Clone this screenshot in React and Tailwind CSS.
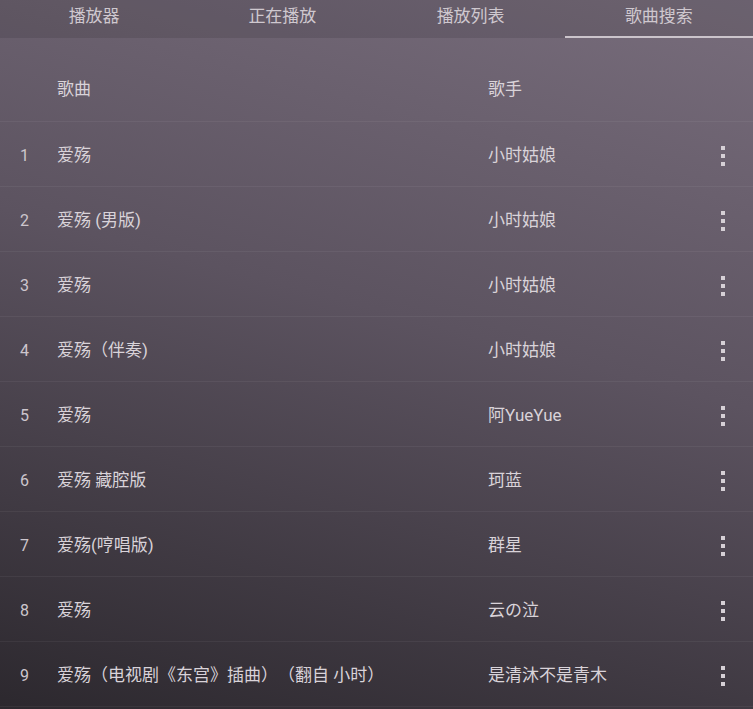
import React from 'react';

const tabs = ['播放器', '正在播放', '播放列表', '歌曲搜索'];

const songs = [
    { title: '爱殇', singer: '小时姑娘' },
    { title: '爱殇 (男版)', singer: '小时姑娘' },
    { title: '爱殇', singer: '小时姑娘' },
    { title: '爱殇（伴奏)', singer: '小时姑娘' },
    { title: '爱殇', singer: '阿YueYue' },
    { title: '爱殇 藏腔版', singer: '珂蓝' },
    { title: '爱殇(哼唱版)', singer: '群星' },
    { title: '爱殇', singer: '云の泣' },
    { title: '爱殇（电视剧《东宫》插曲）（翻自 小时）', singer: '是清沐不是青木' },
];

const MoreIcon = () => (
    <div className="flex flex-col items-center gap-[4px]">
        <span className="block w-[4px] h-[4px] bg-[#d6d0d6]" />
        <span className="block w-[4px] h-[4px] bg-[#d6d0d6]" />
        <span className="block w-[4px] h-[4px] bg-[#d6d0d6]" />
    </div>
);

const App = () => {
    const active = 3;

    return (
        <div
            className="w-[753px] h-[709px] overflow-hidden text-[#d9d3d9] [text-spacing-trim:space-all] bg-[linear-gradient(195deg,#786d7c_0%,#5c5360_45%,#2c282e_100%)]"
            style={{ fontFamily: 'Roboto, "Noto Sans CJK SC", sans-serif' }}
        >
            {/* tabs */}
            <div className="flex h-[38px] bg-black/10">
                {tabs.map((t, i) => (
                    <div
                        key={t}
                        className={
                            'flex-1 flex items-center justify-center text-[17px] text-[#cfc8cf] ' +
                            (i === active ? 'border-b-2 border-[#cbc4cb] pb-[3px]' : 'pb-[5px]')
                        }
                    >
                        {t}
                    </div>
                ))}
            </div>

            {/* table */}
            <div className="pt-[16px]">
                <div className="flex items-center h-[68px] pt-[4px] border-b border-white/5 text-[17px]">
                    <div className="w-[57px]" />
                    <div className="flex-1">歌曲</div>
                    <div className="w-[265px]">歌手</div>
                </div>
                {songs.map((s, i) => (
                    <div
                        key={i}
                        className="flex items-center h-[65px] pt-[4px] border-b border-white/5 text-[17px]"
                    >
                        <div className="w-[57px] pl-[20px] text-[16px] text-[#cdc6cd]">{i + 1}</div>
                        <div className="flex-1 whitespace-nowrap">{s.title}</div>
                        <div className="w-[265px] flex items-center">
                            <div className="flex-1">{s.singer}</div>
                            <div className="w-[60px] flex justify-center">
                                <MoreIcon />
                            </div>
                        </div>
                    </div>
                ))}
            </div>
        </div>
    );
};

export default App;
